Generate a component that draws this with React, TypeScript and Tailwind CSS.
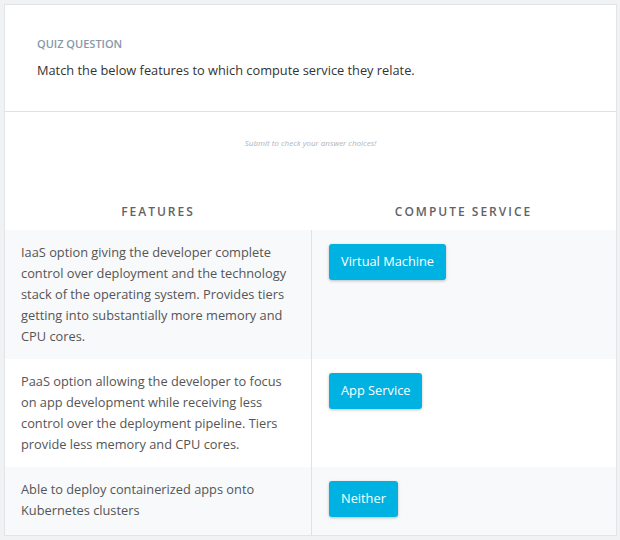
const rows = [
  {
    text: 'IaaS option giving the developer complete control over deployment and the technology stack of the operating system. Provides tiers getting into substantially more memory and CPU cores.',
    answer: 'Virtual Machine',
    shaded: true,
  },
  {
    text: 'PaaS option allowing the developer to focus on app development while receiving less control over the deployment pipeline. Tiers provide less memory and CPU cores.',
    answer: 'App Service',
    shaded: false,
  },
  {
    text: 'Able to deploy containerized apps onto Kubernetes clusters',
    answer: 'Neither',
    shaded: true,
  },
];

const App = () => {
  return (
    <div className="w-[620px] h-[540px] bg-[#f1f2f3] pt-1 pl-1 font-['Open_Sans',sans-serif] overflow-hidden">
      <div className="w-[613px] h-[532px] bg-white border border-[#e2e4e7] flex flex-col">
        {/* QUESTION */}
        <div className="px-[32px] pt-[31px] pb-[31px] border-b border-[#dfe3e7]">
          <div className="text-[11px] leading-4 font-semibold uppercase text-[#8797aa]">Quiz Question</div>
          <p className="mt-2 text-[12.8px] leading-5 text-[#333]">
            Match the below features to which compute service they relate.
          </p>
        </div>

        {/* BODY */}
        <div className="flex-1 flex flex-col">
          <p className="pt-[25px] text-center text-[8px] leading-3 italic text-[#b1b4b8]">
            Submit to check your answer choices!
          </p>
          <div className="mt-[53px] grid grid-cols-[306px_1fr] pb-2">
            <div className="text-center text-[12px] leading-5 font-semibold tracking-[2px] text-[#5f6266]">FEATURES</div>
            <div className="text-center text-[12px] leading-5 font-semibold tracking-[2px] text-[#5f6266]">COMPUTE SERVICE</div>
          </div>
          <div className="flex-1 flex flex-col">
            {rows.map((row, i) => (
              <div
                key={i}
                className={`grid grid-cols-[306px_1fr] ${row.shaded ? 'bg-[#f7f9fb]' : 'bg-white'} ${i === rows.length - 1 ? 'flex-1' : ''}`}
              >
                <div className="pl-[16px] pr-[20px] py-3 text-[12.8px] leading-[21px] text-[#555]">{row.text}</div>
                <div className="border-l border-[#dde2e7] pl-[17px] pt-[14px]">
                  <button className="h-9 px-3 rounded-[3px] bg-[#00b2e2] text-white text-[12.8px] shadow-[0_1px_3px_rgba(0,0,0,0.25)]">
                    {row.answer}
                  </button>
                </div>
              </div>
            ))}
          </div>
        </div>
      </div>
    </div>
  );
};

export default App;
